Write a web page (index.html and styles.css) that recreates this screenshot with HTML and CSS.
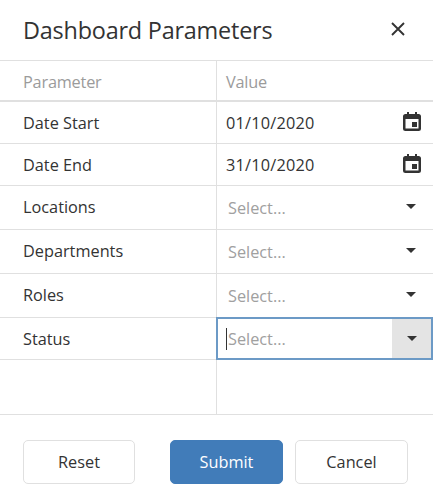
FILE: index.html
```html
<!DOCTYPE html>
<html lang="en">
<head>
    <meta charset="UTF-8">
    <title>Dashboard Parameters</title>
    <link rel="stylesheet" href="styles.css">
</head>
<body>
    <div class="dialog">
        <div class="dialog-header">
            <h1 class="dialog-title">Dashboard Parameters</h1>
            <svg class="close-icon" width="14" height="14" viewBox="0 0 14 14">
                <path d="M1 1L13 13M13 1L1 13" stroke="#333" stroke-width="1.9" fill="none"/>
            </svg>
        </div>

        <div class="params">
            <div class="row head-row">
                <div class="cell name-cell">Parameter</div>
                <div class="cell value-cell">Value</div>
            </div>
            <div class="row date-row">
                <div class="cell name-cell">Date Start</div>
                <div class="cell value-cell">
                    <span class="date-value">01/10/2020</span>
                    <svg class="calendar-icon" width="18" height="19" viewBox="0 0 18 19">
                        <path fill="#333" fill-rule="evenodd" d="M4 0h2v2h6V0h2v2h1.500A2.500 2.500 0 0 1 18 4.500v12A2.500 2.500 0 0 1 15.500 19h-13A2.500 2.500 0 0 1 0 16.500v-12A2.500 2.500 0 0 1 2.500 2H4zM2.500 7v9.500h13V7zM9 10h5v5H9z"/>
                    </svg>
                </div>
            </div>
            <div class="row date-row">
                <div class="cell name-cell">Date End</div>
                <div class="cell value-cell">
                    <span class="date-value">31/10/2020</span>
                    <svg class="calendar-icon" width="18" height="19" viewBox="0 0 18 19">
                        <path fill="#333" fill-rule="evenodd" d="M4 0h2v2h6V0h2v2h1.500A2.500 2.500 0 0 1 18 4.500v12A2.500 2.500 0 0 1 15.500 19h-13A2.500 2.500 0 0 1 0 16.500v-12A2.500 2.500 0 0 1 2.500 2H4zM2.500 7v9.500h13V7zM9 10h5v5H9z"/>
                    </svg>
                </div>
            </div>
            <div class="row select-row">
                <div class="cell name-cell">Locations</div>
                <div class="cell value-cell">
                    <span class="placeholder">Select...</span>
                    <span class="caret"></span>
                </div>
            </div>
            <div class="row select-row">
                <div class="cell name-cell">Departments</div>
                <div class="cell value-cell">
                    <span class="placeholder">Select...</span>
                    <span class="caret"></span>
                </div>
            </div>
            <div class="row select-row">
                <div class="cell name-cell">Roles</div>
                <div class="cell value-cell">
                    <span class="placeholder">Select...</span>
                    <span class="caret"></span>
                </div>
            </div>
            <div class="row status-row">
                <div class="cell name-cell">Status</div>
                <div class="cell focus-cell">
                    <span class="text-cursor"></span>
                    <span class="placeholder">Select...</span>
                    <span class="caret-box"><span class="caret"></span></span>
                </div>
            </div>
            <div class="row empty-row">
                <div class="cell name-cell"></div>
                <div class="cell value-cell"></div>
            </div>
        </div>

        <div class="dialog-footer">
            <button class="btn reset-btn">Reset</button>
            <button class="btn submit-btn">Submit</button>
            <button class="btn cancel-btn">Cancel</button>
        </div>
    </div>
</body>
</html>
```

FILE: styles.css
```css
body, html {
    margin: 0;
    height: 100%;
    background: #fff;
    font-family: "Open Sans", Arial, sans-serif;
    color: #333;
}

.dialog {
    width: 433px;
    height: 498px;
    box-sizing: border-box;
    display: flex;
    flex-direction: column;
    border-radius: 6px 6px 0 0;
    overflow: hidden;
}

.dialog-header {
    height: 61px;
    box-sizing: border-box;
    border-bottom: 1px solid #e0e0e0;
    display: flex;
    align-items: center;
    justify-content: space-between;
    padding: 0 28px 2px 23px;
}

.dialog-title {
    margin: 0;
    font-size: 23.4px;
    font-weight: 400;
    letter-spacing: -0.2px;
    padding-top: 2px;
}

.params {
    height: 354px;
    box-sizing: border-box;
    border-bottom: 1px solid #e0e0e0;
    display: flex;
    flex-direction: column;
    font-size: 16.3px;
}

.row {
    display: grid;
    grid-template-columns: 216px 1fr;
    box-sizing: border-box;
    border-bottom: 1px solid #e0e0e0;
}

.head-row {
    height: 41px;
    border-bottom-width: 2px;
    color: #9b9b9b;
    letter-spacing: -0.2px;
}

.head-row .cell {
    padding-top: 2px;
}

.date-row {
    height: 42px;
}

.select-row {
    height: 44px;
}

.status-row {
    height: 42px;
}

.empty-row {
    flex: 1;
    border-bottom: 0;
}

.cell {
    display: flex;
    align-items: center;
    box-sizing: border-box;
    min-width: 0;
}

.name-cell {
    padding-left: 23px;
}

.value-cell {
    border-left: 1px solid #e0e0e0;
    padding-left: 9px;
    padding-right: 12px;
    justify-content: space-between;
}

.date-row .value-cell {
    padding-bottom: 3px;
}

.select-row .name-cell {
    padding-bottom: 2px;
}

.date-value {
    padding-top: 3px;
    letter-spacing: 0.2px;
}

.placeholder {
    color: #a0a0a0;
    padding-left: 2px;
}

.caret {
    width: 0;
    height: 0;
    border-left: 5px solid transparent;
    border-right: 5px solid transparent;
    border-top: 5px solid #333;
}

.select-row .caret {
    margin-right: 5px;
    margin-bottom: 3px;
}

.focus-cell {
    border: 2px solid #6c9ac6;
    margin-top: -1px;
    margin-bottom: -1px;
    padding-left: 8px;
}

.text-cursor {
    width: 1px;
    height: 22px;
    background: #333;
}

.focus-cell .placeholder {
    padding-left: 1px;
}

.caret-box {
    margin-left: auto;
    width: 39px;
    align-self: stretch;
    background: #e4e4e4;
    display: flex;
    align-items: center;
    justify-content: center;
}

.dialog-footer {
    flex: 1;
    display: flex;
    padding: 25px 0 0 23px;
}

.btn {
    height: 44px;
    box-sizing: border-box;
    border: 1px solid #e0e0e0;
    border-radius: 5px;
    background: #fff;
    color: #333;
    font-family: inherit;
    font-size: 16.3px;
    padding: 0;
}

.reset-btn {
    width: 112px;
}

.submit-btn {
    width: 113px;
    margin-left: 35px;
    background: #417cb9;
    border-color: #417cb9;
    color: #fff;
}

.cancel-btn {
    width: 113px;
    margin-left: 12px;
}
```
